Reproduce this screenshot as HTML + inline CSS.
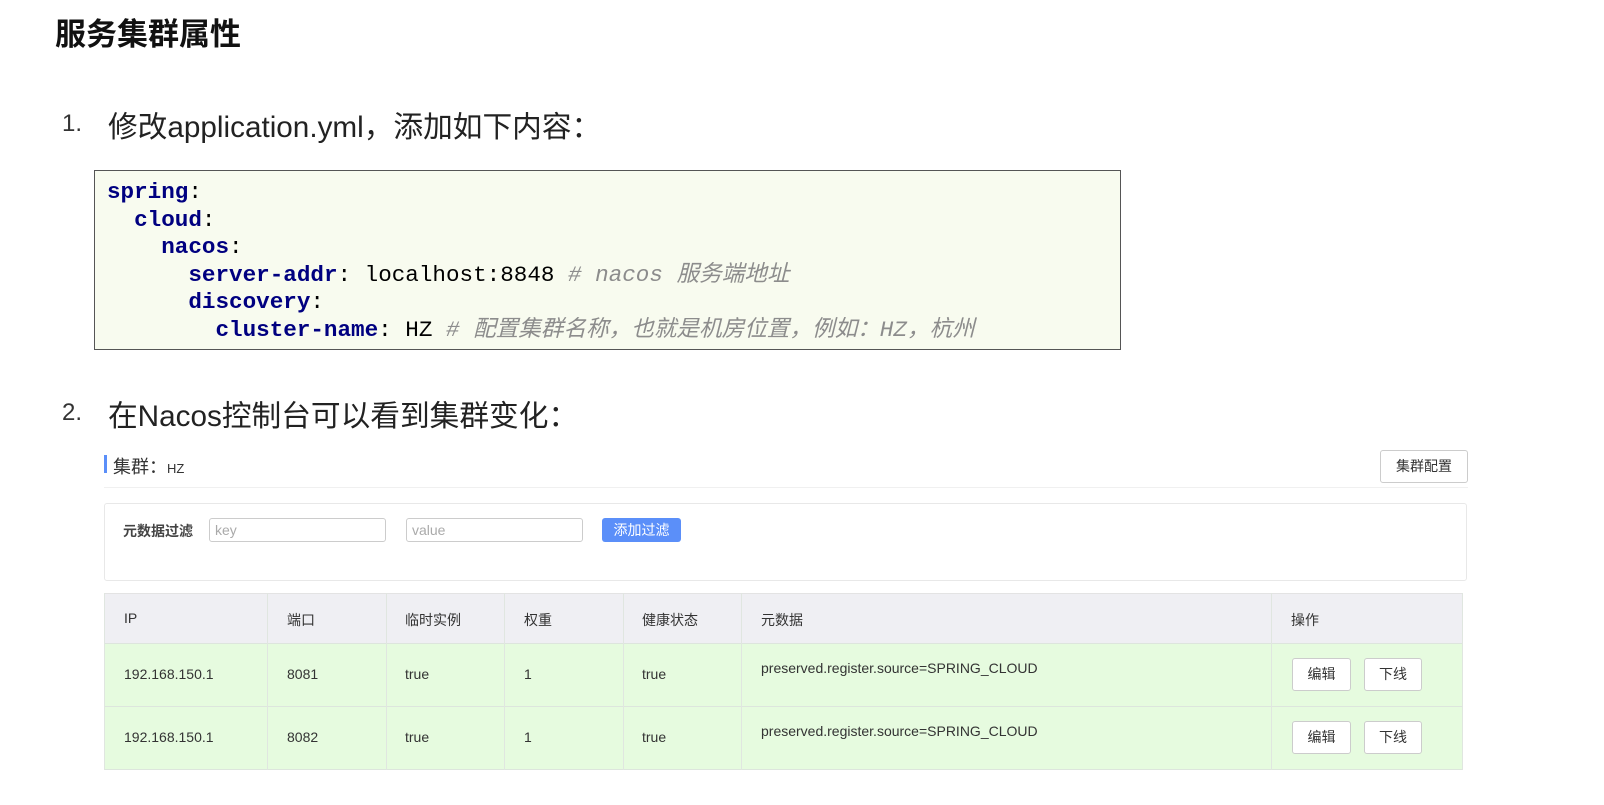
<!DOCTYPE html>
<html><head><meta charset="utf-8"><style>
body{margin:0;width:1604px;height:805px;background:#fff;position:relative;overflow:hidden;font-family:"Liberation Sans","Noto Sans CJK SC",sans-serif;}
.a{position:absolute;white-space:nowrap;}
.code{position:absolute;left:94px;top:170px;width:1027px;height:180px;background:#f8fbef;border:1px solid #555;box-sizing:border-box;}
.code pre{margin:0;position:absolute;left:12px;top:8px;font-family:"Liberation Mono","Noto Sans CJK SC",monospace;font-size:22.6px;line-height:27.5px;color:#000;}
.k{color:#000080;font-weight:bold}
.c{color:#8c8c8c;font-style:italic}
.cell{position:absolute;font-size:14px;color:#333;}
.btn{position:absolute;border:1px solid #ccc;border-radius:3px;background:#fff;font-size:14px;color:#333;text-align:center;box-sizing:border-box;}
.vl{position:absolute;width:1px;background:#e0e6e0;}
</style></head><body>
<div class="a" style="left:55px;top:9px;font-size:31px;font-weight:bold;color:#111;">服务集群属性</div>
<div class="a" style="left:62px;top:110px;font-size:24px;color:#333;">1.</div>
<div class="a" style="left:108px;top:103px;font-size:29.7px;color:#222;">修改application.yml，添加如下内容：</div>
<div class="code"><pre><span class="k">spring</span>:
  <span class="k">cloud</span>:
    <span class="k">nacos</span>:
      <span class="k">server-addr</span>: localhost:8848 <span class="c"># nacos 服务端地址</span>
      <span class="k">discovery</span>:
        <span class="k">cluster-name</span>: HZ <span class="c"># 配置集群名称，也就是机房位置，例如：HZ，杭州</span></pre></div>
<div class="a" style="left:62px;top:399px;font-size:24px;color:#333;">2.</div>
<div class="a" style="left:108px;top:392px;font-size:29.7px;color:#222;">在Nacos控制台可以看到集群变化：</div>

<div class="a" style="left:104px;top:455px;width:3px;height:18px;background:#5b8ff9;"></div>
<div class="a" style="left:113px;top:453px;font-size:18px;color:#333;">集群：<span style="font-size:13px">HZ</span></div>
<div class="btn" style="left:1380px;top:450px;width:88px;height:33px;line-height:31px;">集群配置</div>
<div class="a" style="left:104px;top:487px;width:1364px;height:1px;background:#f0f0f0;"></div>
<div class="a" style="left:104px;top:503px;width:1363px;height:78px;border:1px solid #e8e8e8;border-radius:3px;box-sizing:border-box;"></div>
<div class="a" style="left:123px;top:521px;font-size:14px;font-weight:bold;color:#444;">元数据过滤</div>
<div class="a" style="left:209px;top:518px;width:177px;height:24px;border:1px solid #ccc;border-radius:3px;box-sizing:border-box;font-size:14px;color:#aaa;padding-left:5px;line-height:22px;">key</div>
<div class="a" style="left:406px;top:518px;width:177px;height:24px;border:1px solid #ccc;border-radius:3px;box-sizing:border-box;font-size:14px;color:#aaa;padding-left:5px;line-height:22px;">value</div>
<div class="a" style="left:602px;top:518px;width:79px;height:24px;background:#5b8ff9;border-radius:3px;font-size:14px;color:#fff;text-align:center;line-height:24px;">添加过滤</div>

<div class="a" style="left:104px;top:593px;width:1359px;height:50px;background:#efeff3;border-top:1px solid #e3e3e3;box-sizing:border-box;"></div>
<div class="a" style="left:104px;top:643px;width:1359px;height:127px;background:#e6fbdf;"></div>
<div class="a" style="left:104px;top:643px;width:1359px;height:1px;background:#dde5dd;"></div>
<div class="a" style="left:104px;top:706px;width:1359px;height:1px;background:#dde5dd;"></div>
<div class="a" style="left:104px;top:769px;width:1359px;height:1px;background:#dde5dd;"></div>
<div class="vl" style="left:104px;top:593px;height:177px"></div>
<div class="vl" style="left:267px;top:593px;height:177px"></div>
<div class="vl" style="left:386px;top:593px;height:177px"></div>
<div class="vl" style="left:504px;top:593px;height:177px"></div>
<div class="vl" style="left:623px;top:593px;height:177px"></div>
<div class="vl" style="left:741px;top:593px;height:177px"></div>
<div class="vl" style="left:1271px;top:593px;height:177px"></div>
<div class="vl" style="left:1462px;top:593px;height:177px"></div>

<div class="cell" style="left:124px;top:610px">IP</div>
<div class="cell" style="left:287px;top:610px">端口</div>
<div class="cell" style="left:405px;top:610px">临时实例</div>
<div class="cell" style="left:524px;top:610px">权重</div>
<div class="cell" style="left:642px;top:610px">健康状态</div>
<div class="cell" style="left:761px;top:610px">元数据</div>
<div class="cell" style="left:1291px;top:610px">操作</div>

<div class="cell" style="left:124px;top:666px">192.168.150.1</div>
<div class="cell" style="left:287px;top:666px">8081</div>
<div class="cell" style="left:405px;top:666px">true</div>
<div class="cell" style="left:524px;top:666px">1</div>
<div class="cell" style="left:642px;top:666px">true</div>
<div class="cell" style="left:761px;top:660px">preserved.register.source=SPRING_CLOUD</div>
<div class="btn" style="left:1292px;top:658px;width:59px;height:33px;line-height:31px;">编辑</div>
<div class="btn" style="left:1364px;top:658px;width:58px;height:33px;line-height:31px;">下线</div>

<div class="cell" style="left:124px;top:729px">192.168.150.1</div>
<div class="cell" style="left:287px;top:729px">8082</div>
<div class="cell" style="left:405px;top:729px">true</div>
<div class="cell" style="left:524px;top:729px">1</div>
<div class="cell" style="left:642px;top:729px">true</div>
<div class="cell" style="left:761px;top:723px">preserved.register.source=SPRING_CLOUD</div>
<div class="btn" style="left:1292px;top:721px;width:59px;height:33px;line-height:31px;">编辑</div>
<div class="btn" style="left:1364px;top:721px;width:58px;height:33px;line-height:31px;">下线</div>
</body></html>
